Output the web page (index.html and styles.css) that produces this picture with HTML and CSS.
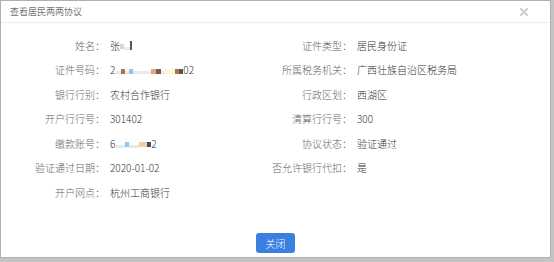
FILE: index.html
```html
<!DOCTYPE html>
<html lang="zh-CN">
<head>
    <meta charset="UTF-8">
    <title>查看居民两两协议</title>
    <link rel="stylesheet" href="styles.css">
</head>
<body>
    <div class="dialog">
        <div class="dialog-head">
            <span class="dialog-title">查看居民两两协议</span>
            <svg class="close-icon" width="8" height="8" viewBox="0 0 8 8">
                <path d="M1 1 L7 7 M7 1 L1 7" stroke="#cfcfcf" stroke-width="2" stroke-linecap="square"/>
            </svg>
        </div>
        <div class="dialog-body">
            <div class="info-grid">
                <div class="label">姓名：</div>
                <div class="value">张<span class="blur b-gray w4"></span><span class="blur b-faint w6"></span><span class="blur b-dark w2"></span></div>
                <div class="label">证件类型：</div>
                <div class="value">居民身份证</div>

                <div class="label">证件号码：</div>
                <div class="value">2<span class="blur b-faint w6"></span><span class="blur b-brown w4"></span><span class="blur b-faint w4"></span><span class="blur b-blue w4"></span><span class="blur b-faint w18"></span><span class="blur b-tan w5"></span><span class="blur b-plum w5"></span><span class="blur b-faint w4"></span><span class="blur b-cream w10"></span><span class="blur b-brown w4"></span><span class="blur b-dark w4"></span>02</div>
                <div class="label">所属税务机关：</div>
                <div class="value">广西壮族自治区税务局</div>

                <div class="label">银行行别：</div>
                <div class="value">农村合作银行</div>
                <div class="label">行政区划：</div>
                <div class="value">西湖区</div>

                <div class="label">开户行行号：</div>
                <div class="value">301402</div>
                <div class="label">清算行行号：</div>
                <div class="value">300</div>

                <div class="label">缴款账号：</div>
                <div class="value">6<span class="blur b-faint w10"></span><span class="blur b-blue w4"></span><span class="blur b-faint w10"></span><span class="blur b-peach w8"></span><span class="blur b-navy w4"></span>2</div>
                <div class="label">协议状态：</div>
                <div class="value">验证通过</div>

                <div class="label">验证通过日期：</div>
                <div class="value">2020-01-02</div>
                <div class="label">否允许银行代扣：</div>
                <div class="value">是</div>

                <div class="label">开户网点：</div>
                <div class="value">杭州工商银行</div>
            </div>
        </div>
        <div class="dialog-foot">
            <button class="btn-close">关闭</button>
        </div>
    </div>
</body>
</html>
```

FILE: styles.css
```css
body {
    margin: 0;
    padding: 0;
    background: #c4c4c4;
    font-family: "Microsoft YaHei", "Noto Sans CJK SC", sans-serif;
    font-size: 10px;
    font-weight: 300;
    color: #333;
}

.dialog {
    width: 549px;
    height: 256px;
    background: #fff;
    border: 1px solid #b0b0b0;
    display: flex;
    flex-direction: column;
}

.dialog-head {
    height: 21px;
    display: flex;
    align-items: center;
    justify-content: space-between;
    padding: 0 22px 0 9px;
    border-bottom: 1px solid #ededed;
}

.dialog-title {
    color: #333;
    font-size: 9px;
}

.close-icon {
    display: block;
}

.dialog-body {
    flex: 1;
    padding-top: 10px;
}

.info-grid {
    display: grid;
    grid-template-columns: 104px 157px 80px 1fr;
    column-gap: 5px;
    grid-auto-rows: 24.5px;
    align-items: center;
}

.label {
    text-align: right;
    color: #666;
    white-space: nowrap;
}

.value {
    color: #333;
    white-space: nowrap;
    display: flex;
    align-items: center;
}

.blur {
    display: inline-block;
    height: 5px;
    margin-top: 3px;
    opacity: 0.85;
}
.w2 { width: 2px; height: 9px; margin-top: 0; }
.w4 { width: 4px; }
.w5 { width: 5px; }
.w6 { width: 6px; }
.w8 { width: 8px; }
.w10 { width: 10px; }
.w18 { width: 18px; }
.b-gray { background: #cfcfcf; }
.b-dark { background: #3a3a3a; }
.b-faint { background: #e6e6e6; height: 3px; margin-top: 6px; }
.b-brown { background: #9a5a3a; }
.b-blue { background: #7fbcf0; }
.b-tan { background: #d79a60; }
.b-plum { background: #6a3a3a; }
.b-cream { background: #fbf6d0; }
.b-peach { background: #f5c88a; }
.b-navy { background: #2a2f4a; }

.dialog-foot {
    display: flex;
    justify-content: center;
    padding-bottom: 4px;
}

.btn-close {
    width: 39px;
    height: 20px;
    padding: 0;
    border: none;
    border-radius: 3px;
    background: #3b7fe0;
    color: #fff;
    font-family: inherit;
    font-size: 10px;
    font-weight: 300;
    cursor: pointer;
}
```
